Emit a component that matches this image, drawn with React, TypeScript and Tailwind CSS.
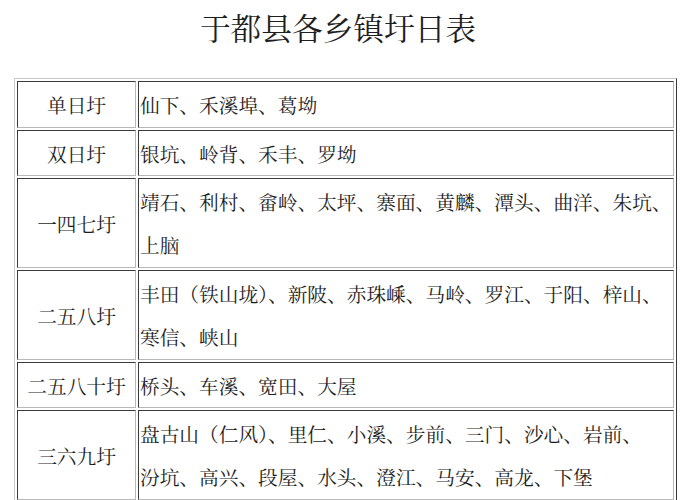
import React from "react";

const font = '"Noto Serif CJK SC", "Noto Sans CJK SC", "Liberation Serif", serif';

type Row = { day: string; lines: string[]; h: number };

const rows: Row[] = [
  { day: "单日圩", lines: ["仙下、禾溪埠、葛坳"], h: 45 },
  { day: "双日圩", lines: ["银坑、岭背、禾丰、罗坳"], h: 44 },
  {
    day: "一四七圩",
    lines: ["靖石、利村、畲岭、太坪、寨面、黄麟、潭头、曲洋、朱坑、", "上脑"],
    h: 88,
  },
  {
    day: "二五八圩",
    lines: ["丰田（铁山垅）、新陂、赤珠嵊、马岭、罗江、于阳、梓山、", "寒信、峡山"],
    h: 88,
  },
  { day: "二五八十圩", lines: ["桥头、车溪、宽田、大屋"], h: 44 },
  {
    day: "三六九圩",
    lines: ["盘古山（仁风）、里仁、小溪、步前、三门、沙心、岩前、", "汾坑、高兴、段屋、水头、澄江、马安、高龙、下堡"],
    h: 88,
  },
];

export default function App() {
  return (
    <div
      className="w-[696px] h-[500px] overflow-hidden bg-white text-[#1e1e1e]"
      style={{ fontFamily: font }}
    >
      <div className="h-[54px] flex items-center justify-center pr-[20px] text-[30.7px] leading-[54px] tracking-[0px]">
        于都县各乡镇圩日表
      </div>
      <div className="pt-[24px] pl-[14px]">
        <table className="w-[663px] table-fixed border-separate border-spacing-[2px] border border-solid border-t-[#c8c8c8] border-l-[#c8c8c8] border-r-[#3a3a3a] border-b-[#3a3a3a]">
          <colgroup>
            <col className="w-[119px]" />
            <col className="w-[536px]" />
          </colgroup>
          <tbody>
            {rows.map((r) => (
              <tr key={r.day}>
                <td
                  className="p-0 border border-solid border-t-[#3a3a3a] border-l-[#3a3a3a] border-r-[#b8b8b8] border-b-[#b8b8b8] text-center align-middle text-[19.7px] leading-[43px] whitespace-nowrap"
                  style={{ height: r.h + 2 }}
                >
                  {r.day}
                </td>
                <td className="p-0 pl-[1px] border border-solid border-t-[#3a3a3a] border-l-[#3a3a3a] border-r-[#b8b8b8] border-b-[#b8b8b8] text-left align-middle text-[19.7px] leading-[43px] whitespace-nowrap">
                  {r.lines.map((l, i) => (
                    <div key={i}>{l}</div>
                  ))}
                </td>
              </tr>
            ))}
          </tbody>
        </table>
      </div>
    </div>
  );
}
